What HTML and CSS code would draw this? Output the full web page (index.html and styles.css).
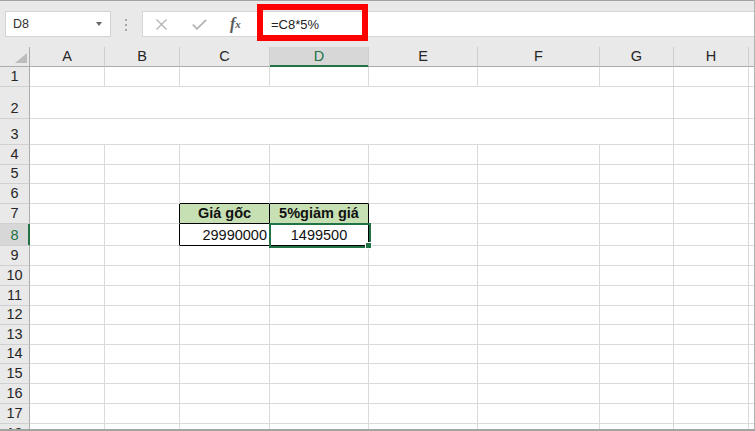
FILE: index.html
```html
<!DOCTYPE html>
<html>
<head>
<meta charset="utf-8">
<title>Excel - D8</title>
<link rel="stylesheet" href="styles.css">
</head>
<body>
<div class="frame">
	<div class="toolbar">
		<div class="namebox"><span>D8</span><i class="caret"></i></div>
		<div class="grip"><i></i><i></i><i></i></div>
		<div class="fbar">
			<div class="fbtns">
				<svg class="ico-x" width="11" height="11" viewBox="0 0 11 11"><path d="M0.5 0.5L10.5 10.5M10.5 0.5L0.5 10.5" stroke="#b3b3b3" stroke-width="1.3" fill="none"/></svg>
				<svg class="ico-ok" width="15" height="11" viewBox="0 0 15 11"><path d="M0.8 5.6L5 9.8L14.2 0.8" stroke="#b3b3b3" stroke-width="1.8" fill="none"/></svg>
				<span class="fx">f<sub>x</sub></span>
			</div>
			<div class="finput">=C8*5%</div>
		</div>
		<div class="mark"></div>
	</div>

	<div class="sheet">
		<!-- column headers -->
		<div class="corner"><svg width="12" height="10" viewBox="0 0 12 10"><path d="M12 0L12 10L0 10Z" fill="#bcbcbc"/></svg></div>
		<div class="ch">A</div><div class="ch">B</div><div class="ch">C</div><div class="ch sel">D</div><div class="ch">E</div><div class="ch">F</div><div class="ch">G</div><div class="ch">H</div><div class="ch end"></div>

		<div class="rh">1</div><div class="c"></div><div class="c"></div><div class="c"></div><div class="c"></div><div class="c"></div><div class="c"></div><div class="c"></div><div class="c"></div><div class="c end"></div>
		<div class="rh">2</div><div class="c wide"></div><div class="c"></div><div class="c end"></div>
		<div class="rh">3</div><div class="c wide"></div><div class="c"></div><div class="c end"></div>
		<div class="rh">4</div><div class="c"></div><div class="c"></div><div class="c"></div><div class="c"></div><div class="c"></div><div class="c"></div><div class="c"></div><div class="c"></div><div class="c end"></div>
		<div class="rh">5</div><div class="c"></div><div class="c"></div><div class="c"></div><div class="c"></div><div class="c"></div><div class="c"></div><div class="c"></div><div class="c"></div><div class="c end"></div>
		<div class="rh">6</div><div class="c"></div><div class="c"></div><div class="c bb"></div><div class="c bb"></div><div class="c"></div><div class="c"></div><div class="c"></div><div class="c"></div><div class="c end"></div>
		<div class="rh">7</div><div class="c"></div><div class="c br"></div><div class="c tb th">Giá gốc</div><div class="c tb th">5%giảm giá</div><div class="c"></div><div class="c"></div><div class="c"></div><div class="c"></div><div class="c end"></div>
		<div class="rh sel">8</div><div class="c"></div><div class="c br"></div><div class="c tb num">29990000</div><div class="c tb mid active">1499500<span class="pick"></span></div><div class="c"></div><div class="c"></div><div class="c"></div><div class="c"></div><div class="c end"></div>
		<div class="rh">9</div><div class="c"></div><div class="c"></div><div class="c"></div><div class="c"></div><div class="c"></div><div class="c"></div><div class="c"></div><div class="c"></div><div class="c end"></div>
		<div class="rh">10</div><div class="c"></div><div class="c"></div><div class="c"></div><div class="c"></div><div class="c"></div><div class="c"></div><div class="c"></div><div class="c"></div><div class="c end"></div>
		<div class="rh">11</div><div class="c"></div><div class="c"></div><div class="c"></div><div class="c"></div><div class="c"></div><div class="c"></div><div class="c"></div><div class="c"></div><div class="c end"></div>
		<div class="rh">12</div><div class="c"></div><div class="c"></div><div class="c"></div><div class="c"></div><div class="c"></div><div class="c"></div><div class="c"></div><div class="c"></div><div class="c end"></div>
		<div class="rh">13</div><div class="c"></div><div class="c"></div><div class="c"></div><div class="c"></div><div class="c"></div><div class="c"></div><div class="c"></div><div class="c"></div><div class="c end"></div>
		<div class="rh">14</div><div class="c"></div><div class="c"></div><div class="c"></div><div class="c"></div><div class="c"></div><div class="c"></div><div class="c"></div><div class="c"></div><div class="c end"></div>
		<div class="rh">15</div><div class="c"></div><div class="c"></div><div class="c"></div><div class="c"></div><div class="c"></div><div class="c"></div><div class="c"></div><div class="c"></div><div class="c end"></div>
		<div class="rh">16</div><div class="c"></div><div class="c"></div><div class="c"></div><div class="c"></div><div class="c"></div><div class="c"></div><div class="c"></div><div class="c"></div><div class="c end"></div>
		<div class="rh">17</div><div class="c"></div><div class="c"></div><div class="c"></div><div class="c"></div><div class="c"></div><div class="c"></div><div class="c"></div><div class="c"></div><div class="c end"></div>
		<div class="rh">18</div><div class="c"></div><div class="c"></div><div class="c"></div><div class="c"></div><div class="c"></div><div class="c"></div><div class="c"></div><div class="c"></div><div class="c end"></div>
	</div>
</div>
</body>
</html>
```
FILE: styles.css
```css
html, body {
	margin: 0;
	height: 100%;
	overflow: hidden;
}
body {
	font-family: "Liberation Sans", Arial, sans-serif;
	background: #fff;
}
.frame {
	position: relative;
	height: 431px;
	box-sizing: border-box;
	border-top: 1px solid #a3a3a3;
	border-bottom: 2px solid #a3a3a3;
	border-right: 1px solid #b5b5b5;
	overflow: hidden;
}

/* formula bar */
.toolbar {
	height: 46px;
	box-sizing: border-box;
	padding-top: 10px;
	background: #e9e9e9;
	display: flex;
	align-items: flex-start;
}
.namebox {
	margin-left: 5px;
	width: 106px;
	height: 26px;
	box-sizing: border-box;
	padding: 0 8px 0 7px;
	background: #fff;
	border: 1px solid #d3d3d3;
	display: flex;
	align-items: center;
	justify-content: space-between;
	font-size: 12.5px;
	color: #333;
}
.caret {
	width: 0;
	height: 0;
	border-left: 3px solid transparent;
	border-right: 3px solid transparent;
	border-top: 4px solid #666;
}
.grip {
	margin-left: 14px;
	padding-top: 8px;
	display: flex;
	flex-direction: column;
	gap: 3px;
}
.grip i {
	width: 2px;
	height: 2px;
	background: #a6a6a6;
}
.fbar {
	flex: 1;
	margin-left: 15px;
	height: 26px;
	box-sizing: border-box;
	background: #fff;
	border: 1px solid #d6d6d6;
	border-right: none;
	display: flex;
}
.fbtns {
	width: 116px;
	box-sizing: border-box;
	padding-left: 13px;
	border-right: 1px solid #d6d6d6;
	display: flex;
	align-items: center;
}
.ico-ok { margin-left: 25px; }
.fx {
	margin-left: 23px;
	font-family: "Liberation Serif", "Times New Roman", serif;
	font-style: italic;
	font-weight: bold;
	font-size: 16px;
	color: #5a5a5a;
	line-height: 16px;
}
.fx sub {
	font-size: 11px;
	vertical-align: 1px;
}
.finput {
	padding-left: 12px;
	display: flex;
	align-items: center;
	font-size: 13px;
	color: #222;
}
.mark {
	position: absolute;
	left: 257px;
	top: 3px;
	width: 111px;
	height: 37px;
	box-sizing: border-box;
	border: 6px solid #ff0000;
}

/* grid */
.sheet {
	display: grid;
	grid-template-columns: 30px 75px 75px 90px 99px 109px 122px 74px 75px 1fr;
	grid-template-rows: 20px 20px 32px 26px 20px 19px 20px 20px 22px 20px 20px 20px 19px 20px 19px 20px 20px 20px 20px;
	font-size: 14.5px;
	line-height: 19px;
}
.sheet > div {
	box-sizing: border-box;
	display: flex;
	align-items: flex-end;
}
.corner {
	background: #e9e9e9;
	border-right: 1px solid #ababab;
	border-bottom: 1px solid #ababab;
	justify-content: flex-end;
	padding: 0 2px 3px 0;
}
.ch {
	background: #e9e9e9;
	border-right: 1px solid #cdcdcd;
	border-bottom: 1px solid #ababab;
	justify-content: center;
	color: #262626;
}
.ch.sel {
	background: #d7d7d7;
	color: #217346;
	border-bottom-color: #217346;
	box-shadow: inset 0 -1px 0 #217346;
}
.ch.end { border-right: none; }
.rh {
	background: #e9e9e9;
	border-right: 1px solid #ababab;
	border-bottom: 1px solid #d0d0d0;
	justify-content: center;
	color: #262626;
}
.rh.sel {
	background: #d7d7d7;
	color: #217346;
	border-right-color: #217346;
	box-shadow: inset -1px 0 0 #217346;
}
.c {
	padding: 0 2px;
	border-right: 1px solid #dadada;
	border-bottom: 1px solid #dadada;
	color: #111;
}
.c.wide { grid-column: span 7; }
.c.end { border-right: none; }
.bb { border-bottom-color: #000 !important; }
.br { border-right-color: #000 !important; }
.tb {
	border-right-color: #000;
	border-bottom-color: #000;
}
.th {
	background: #c6e0b4;
	font-weight: bold;
	justify-content: center;
}
.num { justify-content: flex-end; }
.mid { justify-content: center; }
.active { position: relative; }
.pick {
	position: absolute;
	left: -1px;
	top: -1px;
	right: -3px;
	bottom: -3px;
	border: 2px solid #217346;
}
.pick::after {
	content: "";
	position: absolute;
	right: -3px;
	bottom: -3px;
	width: 5px;
	height: 5px;
	background: #217346;
	border: 1px solid #fff;
}
```
